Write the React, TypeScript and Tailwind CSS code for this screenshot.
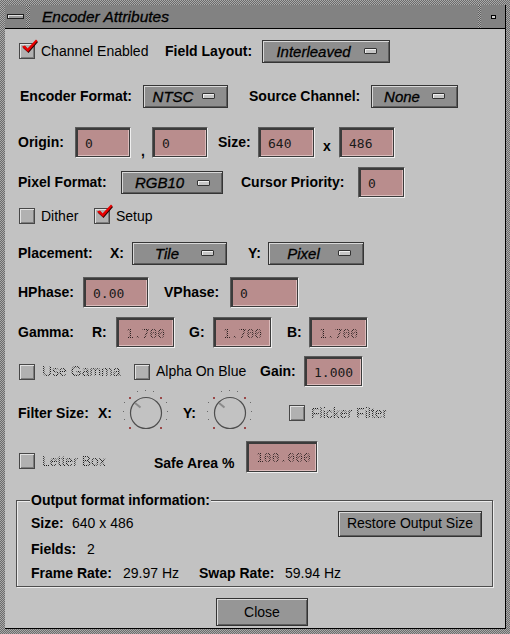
import type { ReactNode } from 'react'

const STIPPLE_TEXT =
    'bg-[repeating-conic-gradient(#1c1c1c_0%_25%,transparent_0%_50%)] bg-[length:2px_2px] bg-clip-text text-transparent'

function B({ className = '', children }: { className?: string; children: ReactNode }) {
    return <span className={`shrink-0 text-[14px] font-bold leading-[17px] text-black ${className}`}>{children}</span>
}

function T({ className = '', dim = false, children }: { className?: string; dim?: boolean; children: ReactNode }) {
    return (
        <span className={`shrink-0 text-[14px] leading-[17px] ${dim ? STIPPLE_TEXT : 'text-black'} ${className}`}>
            {children}
        </span>
    )
}

function Check({ on = false, className = '' }: { on?: boolean; className?: string }) {
    return (
        <span
            className={`relative block h-[16px] w-[16px] shrink-0 border border-[#474747] bg-[#b1b1b1] shadow-[inset_1px_1px_0_#e2e2e2,inset_-1px_-1px_0_#7c7c7c] ${className}`}
        >
            {on && (
                <svg className="absolute -top-[5px] left-[1px]" width="18" height="17" viewBox="0 0 18 17">
                    <path d="M1.5 8.5 L4.5 7.5 L7 10.5 L15.5 1.5 L17 3 L7.5 14 Z" fill="#2a0000" />
                    <path d="M1 7.5 L4 6.5 L6.5 9.5 L15 0.5 L16.5 2 L7 13 Z" fill="#e80000" />
                </svg>
            )}
        </span>
    )
}

function Opt({ label, className = '' }: { label: string; className?: string }) {
    return (
        <div
            className={`flex h-[23px] shrink-0 items-center border border-[#353535] bg-[#8e8e8e] shadow-[inset_1px_1px_0_#d8d8d8,inset_-1px_-1px_0_#5c5c5c] ${className}`}
        >
            <span className="flex-1 text-center text-[15px] italic leading-[17px] text-black [-webkit-text-stroke:0.3px_#000]">{label}</span>
            <span className="mr-[12px] h-[6px] w-[13px] shrink-0 rounded-[1px] border border-[#333] bg-[#c6c6c6] shadow-[inset_1px_1px_0_#efefef]" />
        </div>
    )
}

function Field({ value, dim = false, className = '' }: { value: string; dim?: boolean; className?: string }) {
    return (
        <div
            className={`h-[31px] shrink-0 border border-t-[#5c5c5c] border-l-[#5c5c5c] border-b-[#efefef] border-r-[#efefef] ${className}`}
        >
            <div className="flex h-full items-center overflow-hidden border-2 border-[#3b3b3b] border-b border-r bg-[#b98d8d] pl-[7px] shadow-[inset_-1px_-1px_0_#dcbcbc]">
                <span
                    className={`whitespace-nowrap font-['DejaVu_Sans_Mono',monospace] text-[13px] leading-[15px] ${dim ? 'bg-[repeating-conic-gradient(#2a2020_0%_25%,transparent_0%_50%)] bg-[length:2px_2px] bg-clip-text text-transparent' : 'text-[#1a1a1a]'}`}
                >
                    {value}
                </span>
            </div>
        </div>
    )
}

function Btn({ label, className = '' }: { label: string; className?: string }) {
    return (
        <div
            className={`flex shrink-0 items-center justify-center border border-[#333] bg-[#969696] text-[14px] leading-[17px] text-black shadow-[inset_1px_1px_0_#dcdcdc,inset_-1px_-1px_0_#5e5e5e] ${className}`}
        >
            {label}
        </div>
    )
}

const RED_DOTS = [
    [-17, -16],
    [14, -16],
    [-17, 14],
    [14, 14],
]
const GRAY_DOTS = [
    [-9, -22],
    [-1, -23],
    [7, -22],
    [-22, -11],
    [-23, -2],
    [-22, 6],
    [20, -11],
    [21, -2],
    [20, 6],
]

function Knob() {
    const cx = 25
    const cy = 23
    return (
        <svg className="shrink-0" width="50" height="46" viewBox="0 0 50 46">
            <circle cx={cx} cy={cy} r="15.5" fill="none" stroke="#4e4e4e" strokeWidth="1.2" />
            <line x1={cx - 11} y1={cy - 10} x2={cx - 5.5} y2={cy - 5.5} stroke="#8a8a8a" strokeWidth="2" />
            {GRAY_DOTS.map(([x, y], i) => (
                <rect key={i} x={cx + x} y={cy + y} width="1" height="1" fill="#6a6a6a" />
            ))}
            {RED_DOTS.map(([x, y], i) => (
                <rect key={i} x={cx + x} y={cy + y} width="2" height="2" fill="#9a4848" />
            ))}
        </svg>
    )
}

export default function App() {
    return (
        <div className="h-[634px] w-[510px] bg-[repeating-conic-gradient(#6c6c6c_0%_25%,#a9a9a9_0%_50%)] bg-[length:2px_2px] pt-[5px] pb-[5px] pl-[5px] pr-[4px] font-['Liberation_Sans',Arial,sans-serif]">
            <div className="flex h-full flex-col border-r border-b border-black bg-[#c2c2c2]">
                {/* title bar */}
                <div className="flex h-[24px] shrink-0 items-center border-b border-black bg-[#828282]">
                    <div className="flex h-full w-[21px] items-center justify-center">
                        <span className="h-[5px] w-[17px] border border-[#1e1e1e] bg-[#9a9a9a] shadow-[inset_1px_1px_0_#e0e0e0]" />
                    </div>
                    <div className="h-full w-[4px] bg-[repeating-conic-gradient(#5e5e5e_0%_25%,#a9a9a9_0%_50%)] bg-[length:2px_2px]" />
                    <span className="ml-[12px] flex-1 text-[15.5px] italic leading-[17px] text-black [-webkit-text-stroke:0.3px_#000]">
                        Encoder Attributes
                    </span>
                    <div className="h-full w-[3px] bg-[repeating-conic-gradient(#5e5e5e_0%_25%,#a9a9a9_0%_50%)] bg-[length:2px_2px]" />
                    <div className="flex h-full w-[24px] items-center justify-center">
                        <span className="h-[4px] w-[5px] border border-black bg-[#d0d0d0]" />
                    </div>
                </div>

                <div className="flex flex-col pl-[13px]">
                    {/* Channel Enabled / Field Layout */}
                    <div className="mt-[10px] flex h-[24px] items-center">
                        <Check on className="ml-[1px]" />
                        <T className="w-[130px] pl-[6px]">Channel Enabled</T>
                        <B className="w-[97px]">Field Layout:</B>
                        <Opt label="Interleaved" className="w-[128px]" />
                    </div>

                    {/* Encoder Format / Source Channel */}
                    <div className="mt-[21px] flex h-[24px] items-center">
                        <B className="ml-[2px] w-[123px]">Encoder Format:</B>
                        <Opt label="NTSC" className="w-[85px]" />
                        <B className="w-[143px] pl-[21px]">Source Channel:</B>
                        <Opt label="None" className="w-[87px]" />
                    </div>

                    {/* Origin / Size */}
                    <div className="mt-[19px] flex h-[31px] items-center">
                        <B className="w-[57px]">Origin:</B>
                        <Field value="0" className="w-[56px]" />
                        <span className="w-[21px] shrink-0 self-end pl-[10px] text-[14px] font-bold leading-[14px]">,</span>
                        <Field value="0" className="w-[56px]" />
                        <B className="w-[50px] pl-[10px]">Size:</B>
                        <Field value="640" className="w-[57px]" />
                        <B className="w-[24px] pl-[8px] pt-[7px]">x</B>
                        <Field value="486" className="w-[56px]" />
                    </div>

                    {/* Pixel Format / Cursor Priority */}
                    <div className="mt-[9px] flex h-[31px] items-center">
                        <B className="w-[103px]">Pixel Format:</B>
                        <Opt label="RGB10" className="w-[102px]" />
                        <B className="w-[135px] pl-[18px]">Cursor Priority:</B>
                        <Field value="0" className="w-[47px]" />
                    </div>

                    {/* Dither / Setup */}
                    <div className="mt-[8px] flex h-[20px] items-center">
                        <Check className="ml-[1px]" />
                        <T className="w-[59px] pl-[6px]">Dither</T>
                        <Check on />
                        <T className="pl-[6px]">Setup</T>
                    </div>

                    {/* Placement */}
                    <div className="mt-[15px] flex h-[24px] items-center">
                        <B className="w-[92px]">Placement:</B>
                        <B className="w-[22px]">X:</B>
                        <Opt label="Tile" className="w-[95px]" />
                        <B className="w-[41px] pl-[21px]">Y:</B>
                        <Opt label="Pixel" className="w-[96px]" />
                    </div>

                    {/* HPhase / VPhase */}
                    <div className="mt-[12px] flex h-[31px] items-center">
                        <B className="w-[65px]">HPhase:</B>
                        <Field value="0.00" className="w-[66px]" />
                        <B className="w-[81px] pl-[15px]">VPhase:</B>
                        <Field value="0" className="w-[69px]" />
                    </div>

                    {/* Gamma */}
                    <div className="mt-[9px] flex h-[31px] items-center">
                        <B className="w-[74px]">Gamma:</B>
                        <B className="w-[24px]">R:</B>
                        <Field value="1.700" dim className="w-[59px]" />
                        <B className="w-[38px] pl-[14px]">G:</B>
                        <Field value="1.700" dim className="w-[59px]" />
                        <B className="w-[37px] pl-[15px]">B:</B>
                        <Field value="1.700" dim className="w-[59px]" />
                    </div>

                    {/* Use Gamma / Alpha On Blue / Gain */}
                    <div className="mt-[8px] flex h-[31px] items-center">
                        <Check className="ml-[1px]" />
                        <T dim className="w-[99px] pl-[7px]">Use Gamma</T>
                        <Check />
                        <T className="w-[110px] pl-[6px]">Alpha On Blue</T>
                        <B className="w-[44px]">Gain:</B>
                        <Field value="1.000" className="w-[59px]" />
                    </div>

                    {/* Filter Size */}
                    <div className="mt-[3px] flex h-[46px] items-center">
                        <B className="w-[80px]">Filter Size:</B>
                        <B className="w-[23px]">X:</B>
                        <Knob />
                        <B className="w-[34px] pl-[12px]">Y:</B>
                        <Knob />
                        <Check className="ml-[34px]" />
                        <T dim className="pl-[6px]">Flicker Filter</T>
                    </div>

                    {/* Letter Box / Safe Area */}
                    <div className="mt-[5px] flex h-[40px] items-center">
                        <Check className="ml-[1px]" />
                        <T dim className="w-[119px] pl-[7px]">Letter Box</T>
                        <B className="w-[92px] pt-[4px]">Safe Area %</B>
                        <Field value="100.000" dim className="h-[32px] w-[72px] self-start" />
                    </div>
                </div>

                {/* Output format information */}
                <fieldset className="mt-[10px] ml-[11px] w-[477px] border border-[#4e4e4e] pb-[1px] pl-[14px] pr-[10px] pt-[1px] shadow-[inset_1px_1px_0_#ececec,1px_1px_0_#ececec]">
                    <legend className="-ml-[1px] bg-[#c2c2c2] px-[1px] text-[14px] font-bold leading-[18px] text-black">
                        Output format information:
                    </legend>
                    <div className="flex h-[27px] items-center">
                        <B className="w-[41px]">Size:</B>
                        <T className="flex-1">640 x 486</T>
                        <Btn label="Restore Output Size" className="h-[26px] w-[144px]" />
                    </div>
                    <div className="flex h-[24px] items-center">
                        <B className="w-[56px]">Fields:</B>
                        <T>2</T>
                    </div>
                    <div className="flex h-[24px] items-center">
                        <B className="w-[92px]">Frame Rate:</B>
                        <T className="w-[76px]">29.97 Hz</T>
                        <B className="w-[86px]">Swap Rate:</B>
                        <T>59.94 Hz</T>
                    </div>
                </fieldset>

                <div className="mt-[11px] flex">
                    <Btn label="Close" className="ml-[211px] h-[28px] w-[92px]" />
                </div>
            </div>
        </div>
    )
}
